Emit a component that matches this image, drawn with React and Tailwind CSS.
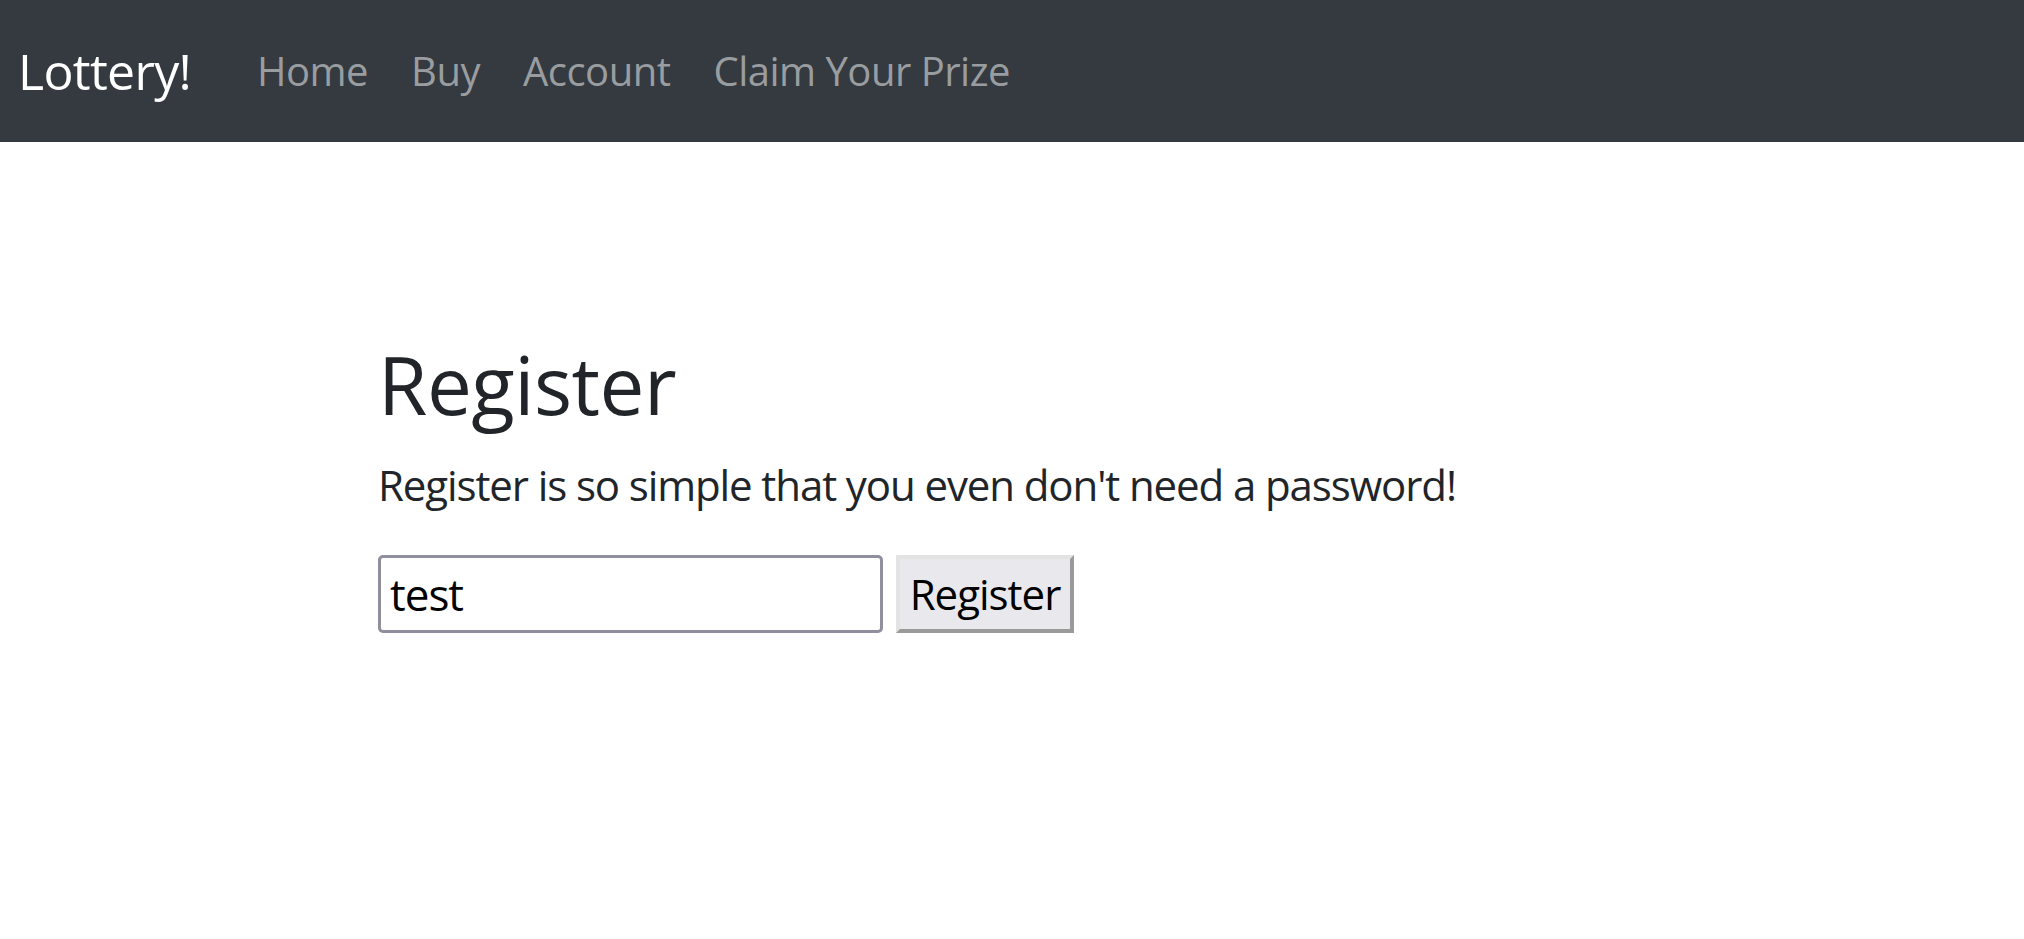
import React, { useState } from 'react'

const navLinks = ['Home', 'Buy', 'Account', 'Claim Your Prize']

function Navbar() {
  return (
    <nav className="flex h-[142px] items-center bg-[#343a40] pl-[18px]">
      <a href="#" className="text-[50px] leading-[60px] tracking-[-0.7px] text-white">
        Lottery!
      </a>
      <ul className="ml-[66px] flex items-center gap-[43px]">
        {navLinks.map(link => (
          <li key={link}>
            <a href="#" className="text-[40px] leading-[48px] tracking-[-0.5px] text-[#9a9da0]">
              {link}
            </a>
          </li>
        ))}
      </ul>
    </nav>
  )
}

function RegisterForm() {
  const [name, setName] = useState('test')

  return (
    <div className="pl-[378px] pt-[202px]">
      <h1 className="text-[80px] leading-none tracking-[-0.5px] text-[#212529]">Register</h1>
      <p className="mt-[40px] text-[42px] leading-none tracking-[-1.1px] text-[#212529]">
        Register is so simple that you even don&apos;t need a password!
      </p>
      <form className="mt-[49px] flex items-center gap-[13px]" onSubmit={e => e.preventDefault()}>
        <input
          value={name}
          onChange={e => setName(e.target.value)}
          className="h-[78px] w-[505px] rounded-[5px] border-[3px] border-[#8f8f9d] bg-white px-[9px] text-[44px] tracking-[-1px] text-black outline-none"
        />
        <button
          type="submit"
          className="h-[78px] w-[178px] border-[4px] border-t-[#e3e3e3] border-l-[#e3e3e3] border-r-[#9a9a9a] border-b-[#9a9a9a] bg-[#e9e9ed] text-[42px] leading-none tracking-[-1px] text-black"
        >
          Register
        </button>
      </form>
    </div>
  )
}

export default function App() {
  return (
    <div className="min-h-screen bg-white" style={{ fontFamily: '"Open Sans", "Noto Sans", sans-serif' }}>
      <Navbar />
      <RegisterForm />
    </div>
  )
}
